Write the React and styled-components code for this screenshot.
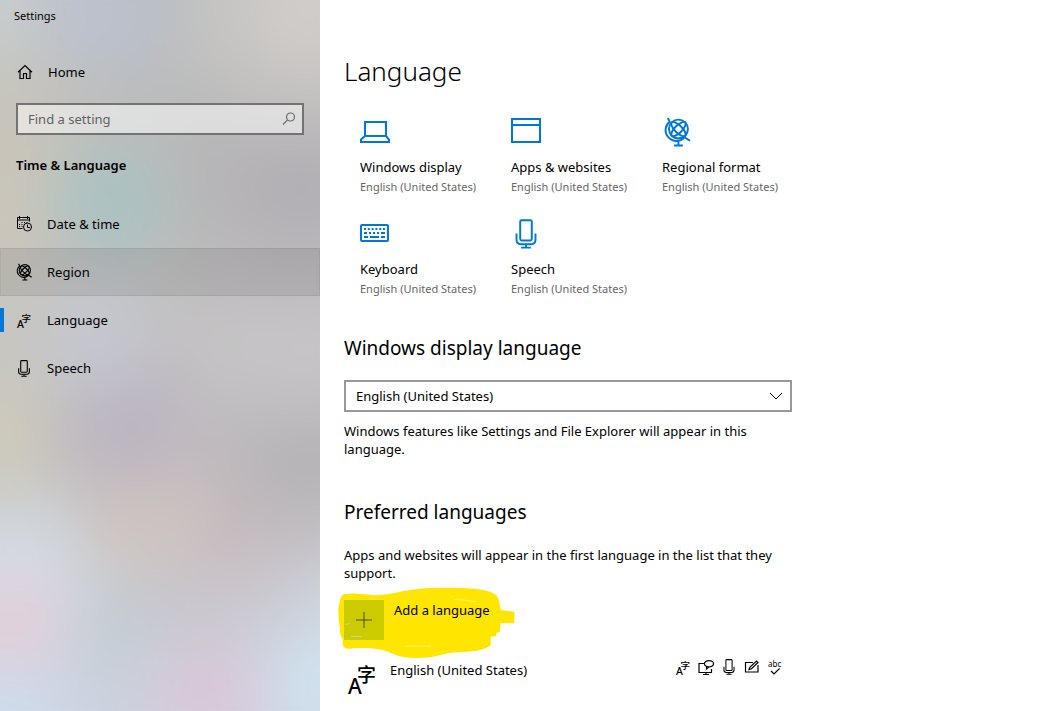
import React, { useState } from "react"
import styled, { createGlobalStyle } from "styled-components"

const GlobalStyle = createGlobalStyle`
  * {
    box-sizing: border-box;
  }

  body {
    margin: 0;
    background: #ffffff;
    color: #000000;
    font-family: "Segoe UI", "Noto Sans", "Open Sans", "Noto Sans CJK SC", sans-serif;
    font-size: 13px;
    line-height: 18px;
  }
`

const Page = styled.div`
  display: flex;
  min-height: 100vh;
`

const Sidebar = styled.aside`
  flex: 0 0 320px;
  position: relative;
  z-index: 0;
  overflow: hidden;
  background: #bfbebe;

  &::before {
    content: "";
    position: absolute;
    inset: -48px;
    z-index: -1;
    filter: blur(20px);
    background:
      radial-gradient(circle at 36% 8%, #bcc2d2 0, transparent 90px),
      radial-gradient(circle at 10% 6%, #cbd0d0 0, transparent 110px),
      radial-gradient(circle at 86% 7%, #d4cfcb 0, transparent 160px),
      radial-gradient(circle at 38% 31%, #a6c3c4 0, transparent 85px),
      radial-gradient(circle at 12% 21%, #c9c5ba 0, transparent 130px),
      radial-gradient(circle at 10% 32%, #cdc8bb 0, transparent 120px),
      radial-gradient(circle at 84% 29%, #b0aeb3 0, transparent 170px),
      radial-gradient(circle at 85% 46%, #cac8cb 0, transparent 140px),
      radial-gradient(circle at 34% 47%, #c6c9d2 0, transparent 90px),
      radial-gradient(circle at 10% 47%, #c8c7c0 0, transparent 110px),
      radial-gradient(circle at 42% 58%, #b9b2c0 0, transparent 110px),
      radial-gradient(circle at 12% 59%, #d0ccba 0, transparent 100px),
      radial-gradient(circle at 86% 61%, #b1b0b3 0, transparent 130px),
      radial-gradient(circle at 44% 70%, #d1c5bf 0, transparent 90px),
      radial-gradient(circle at 66% 72%, #c7bbbf 0, transparent 150px),
      radial-gradient(circle at 14% 83%, #e5ced9 0, transparent 85px),
      radial-gradient(circle at 14% 76%, #d4dee6 0, transparent 110px),
      radial-gradient(circle at 62% 92%, #dcc4d7 0, transparent 85px),
      radial-gradient(circle at 90% 90%, #d1e3f0 0, transparent 140px),
      radial-gradient(circle at 10% 94%, #cddfef 0, transparent 110px),
      radial-gradient(circle at 40% 82%, #c3ccd3 0, transparent 100px),
      linear-gradient(
        180deg,
        #b9bcbd 6%,
        #bdbcba 30%,
        #c2c1c1 46%,
        #c6c4c3 66%,
        #cdd3db 77%,
        #cdd1df 94%
      );
  }
`

const WindowTitle = styled.div`
  height: 32px;
  padding: 7px 14px;
  font-size: 11px;
`

const HomeLink = styled.a`
  display: flex;
  align-items: center;
  gap: 15px;
  height: 48px;
  margin-top: 16px;
  padding: 0 17px;
  color: inherit;
  text-decoration: none;
`

const SearchBox = styled.label`
  display: flex;
  align-items: center;
  height: 32px;
  margin: 7px 16px 0;
  padding: 0 6px 0 10px;
  border: 2px solid #737373;
  background: rgba(255, 255, 255, 0.5);
  color: #6a6a6a;
`

const SearchInput = styled.input`
  flex: 1;
  min-width: 0;
  padding: 0;
  border: none;
  outline: none;
  background: transparent;
  font: inherit;

  &::placeholder {
    color: #626262;
    opacity: 1;
  }
`

const SidebarHeading = styled.h2`
  margin: 21px 16px 26px;
  font-size: 13px;
  font-weight: 600;
  line-height: 18px;
`

const NavItem = styled.a`
  display: flex;
  align-items: center;
  gap: 15px;
  position: relative;
  height: 48px;
  padding: 0 16px;
  color: inherit;
  text-decoration: none;
  background: ${({ $hovered }) =>
    $hovered ? "rgba(0, 0, 0, 0.08)" : "transparent"};
  box-shadow: ${({ $hovered }) =>
    $hovered ? "inset 0 0 0 1px rgba(0, 0, 0, 0.06)" : "none"};

  &::before {
    content: "";
    display: ${({ $current }) => ($current ? "block" : "none")};
    position: absolute;
    left: 0;
    top: 12px;
    width: 4px;
    height: 24px;
    background: #0078d7;
  }
`

const Main = styled.main`
  flex: 1;
  min-width: 0;
  padding: 51px 24px 12px;
`

const Content = styled.div`
  max-width: 448px;
`

const Title = styled.h1`
  margin: 0 0 25px;
  font-size: 26px;
  font-weight: 300;
  line-height: 40px;
`

const Tiles = styled.div`
  display: grid;
  grid-template-columns: repeat(3, 1fr);
  row-gap: 20px;
  margin: 0 -21px 0 16px;
`

const Tile = styled.a`
  display: flex;
  flex-direction: column;
  color: inherit;
  text-decoration: none;
  white-space: nowrap;
`

const TileIcon = styled.span`
  display: flex;
  align-items: flex-start;
  height: 42px;
  padding-top: 1px;
  color: #0078d7;
`

const TileCaption = styled.span`
  line-height: 22px;
  color: #666666;
  font-size: 11px;
`

const SectionTitle = styled.h2`
  margin: ${({ $first }) => ($first ? "34px 0 18px" : "40px 0 20px")};
  font-size: 19px;
  font-weight: 400;
  line-height: 28px;
`

const SelectWrapper = styled.div`
  display: grid;
  align-items: center;

  > * {
    grid-area: 1 / 1;
  }

  > svg {
    justify-self: end;
    margin-right: 9px;
    pointer-events: none;
  }
`

const Select = styled.select`
  width: 100%;
  height: 32px;
  padding: 0 32px 0 10px;
  border: 2px solid #999999;
  border-radius: 0;
  appearance: none;
  background: #ffffff;
  color: #000000;
  font: inherit;
`

const Text = styled.p`
  margin: 10px 0 0;
`

const AddButton = styled.button`
  display: flex;
  position: relative;
  z-index: 0;
  gap: 10px;
  height: 40px;
  margin: 18px 0 0;
  padding: 0;
  border: none;
  background: none;
  color: inherit;
  font: inherit;
  cursor: pointer;
`

const AddTile = styled.span`
  display: flex;
  align-items: center;
  justify-content: center;
  width: 40px;
  height: 40px;
  background: #cccc00;
`

const Highlight = styled.svg`
  position: absolute;
  left: -6px;
  top: -13px;
  z-index: -1;
`

const AddLabel = styled.span`
  line-height: 20px;
`

const LanguageRow = styled.div`
  display: flex;
  align-items: flex-start;
  gap: 14px;
  margin-top: 20px;
  padding: 0 10px 0 4px;
`

const LanguageIcon = styled.span`
  display: flex;
  padding-top: 5px;
`

const LanguageName = styled.span`
  flex: 1;
  line-height: 20px;
`

const Features = styled.span`
  display: flex;
  align-items: center;
  gap: 8px;
  height: 14px;
`

const Svg = ({ width, height, box, children, stroke = 1 }) => (
  <svg
    width={width}
    height={height}
    viewBox={box || `0 0 ${width} ${height}`}
    fill="none"
    stroke="currentColor"
    strokeWidth={stroke}
    overflow="visible"
    aria-hidden="true"
  >
    {children}
  </svg>
)

const HomeIcon = () => (
  <Svg width={16} height={16} stroke={1.2}>
    <path d="M1 8.2 8 1.5l7 6.7M3 6.5V14.5H6.5V9.5H9.5V14.5H13V6.5" />
  </Svg>
)

const SearchIcon = () => (
  <Svg width={14} height={14} stroke={1.2}>
    <circle cx="8.5" cy="5" r="4" />
    <path d="M5.6 7.9 1 12.5" />
  </Svg>
)

const CalendarIcon = () => (
  <Svg width={16} height={18}>
    <path d="M6.5 13.5H1.5V2.5h12v4M1.5 5h12M3.5 1v3M11.5 1v3" />
    <path
      d="M5.5 7.5h1M8 7.5h1M10.5 7.5h1M3 9.5h1M5.5 9.5h1M3 11.5h1M5.5 11.5h1"
      strokeWidth="1.2"
    />
    <circle cx="11.5" cy="12" r="4" />
    <path d="M11.5 9.5v3h2.5" />
  </Svg>
)

const GlobeIcon = ({ width, height, stroke }) => (
  <Svg width={width} height={height} box="0 0 28 31" stroke={stroke}>
    <circle cx="15.5" cy="12.5" r="9.8" />
    <g transform="rotate(45 15.5 12.5)">
      <ellipse cx="15.5" cy="12.5" rx="3.8" ry="9.8" />
      <ellipse cx="15.5" cy="12.5" rx="9.8" ry="3.8" />
    </g>
    <path d="M4.5 1 6.5 5C1.5 8.5.8 15.500 4.500 20.300c4.500 5.400 11.500 6 16.700 1.700M21 20.500 27.500 24.500M15.500 25v4M11 29.500h9" />
  </Svg>
)

const LanguageGlyph = ({ width = 14, height = 15 }) => (
  <svg
    width={width}
    height={height}
    viewBox="0 0 28 30"
    fill="currentColor"
    fontWeight="500"
    overflow="visible"
    aria-hidden="true"
  >
    <text x="0" y="29" fontSize="21" fontFamily="Noto Sans, sans-serif">
      A
    </text>
    <text
      x="9"
      y="17"
      fontSize="19"
      fontFamily="Noto Sans CJK SC, sans-serif"
    >
      字
    </text>
  </svg>
)

const MicIcon = ({ width, height, stroke }) => (
  <Svg width={width} height={height} box="0 0 22 31" stroke={stroke}>
    <rect x="5" y="1.2" width="12" height="21" rx="1.5" />
    <path d="M1.2 15v6.5q0 4.5 4.5 4.5h10.6q4.5 0 4.5-4.5V15M11 26v3.5M6 29.6h10" />
  </Svg>
)

const LaptopIcon = () => (
  <Svg width={30} height={30} stroke={2}>
    <path d="M5 19V5H26V19M5 19H26L29 22.5V25H1V22.5Z" />
  </Svg>
)

const WindowIcon = () => (
  <Svg width={30} height={30} stroke={2}>
    <path d="M1 2H29V25H1ZM1 8H29" />
  </Svg>
)

const KeyboardIcon = () => (
  <Svg width={29} height={30} stroke={2}>
    <rect x="1" y="6" width="27" height="16" rx="1" />
    <path d="M4 10h21" strokeDasharray="2 1.8" />
    <path d="M4 14h3M9 14h2M13 14h2M17 14h2M21 14h4M4 18h4M10 18h9M21 18h4" />
  </Svg>
)

const DisplaySpeechIcon = () => (
  <Svg width={16} height={16} stroke={1.2}>
    <path d="M6 4.5H1v9h12.5V10M5 15.5h6M8 13.5v2" />
    <ellipse cx="11" cy="4.8" rx="4.6" ry="3.2" />
    <path d="M8.5 7.5v2.5l2.5-2" />
  </Svg>
)

const PenIcon = () => (
  <Svg width={16} height={16} stroke={1.2}>
    <path d="M9 3.5H1.5v9.5h12.5V6" />
    <path d="M5 10.5l1-2.5L12.5 2l1.5 1.5L7.5 9.8Z" />
  </Svg>
)

const SpellingIcon = () => (
  <Svg width={14} height={16} stroke={1.2}>
    <text
      x="0"
      y="8"
      fontSize="8"
      fontFamily="Noto Sans, sans-serif"
      fill="currentColor"
      stroke="none"
    >
      abc
    </text>
    <path d="M3 12l3 3 5.5-5.5" />
  </Svg>
)

const navItems = [
  { name: "Date & time", icon: <CalendarIcon /> },
  {
    name: "Region",
    icon: <GlobeIcon width={16} height={18} stroke={2} />,
    hovered: true,
  },
  { name: "Language", icon: <LanguageGlyph width={16} />, current: true },
  { name: "Speech", icon: <MicIcon width={16} height={17} stroke={2} /> },
]

const tiles = [
  { name: "Windows display", icon: <LaptopIcon /> },
  { name: "Apps & websites", icon: <WindowIcon /> },
  {
    name: "Regional format",
    icon: <GlobeIcon width={30} height={30} stroke={2} />,
  },
  { name: "Keyboard", icon: <KeyboardIcon /> },
  { name: "Speech", icon: <MicIcon width={30} height={30} stroke={2} /> },
]

const App = () => {
  const [search, setSearch] = useState("")

  return (
    <Page>
      <GlobalStyle />
      <Sidebar>
        <WindowTitle>Settings</WindowTitle>
        <HomeLink href="#home">
          <HomeIcon />
          Home
        </HomeLink>
        <SearchBox>
          <SearchInput
            type="text"
            aria-label="Find a setting"
            placeholder="Find a setting"
            value={search}
            onChange={e => setSearch(e.target.value)}
          />
          <SearchIcon />
        </SearchBox>
        <SidebarHeading>Time & Language</SidebarHeading>
        <nav>
          {navItems.map(({ name, icon, hovered, current }) => (
            <NavItem
              key={name}
              href="#settings"
              $hovered={hovered}
              $current={current}
            >
              {icon}
              {name}
            </NavItem>
          ))}
        </nav>
      </Sidebar>
      <Main>
        <Content>
          <Title>Language</Title>
          <Tiles>
            {tiles.map(({ name, icon }) => (
              <Tile key={name} href="#language">
                <TileIcon>{icon}</TileIcon>
                <span>{name}</span>
                <TileCaption>English (United States)</TileCaption>
              </Tile>
            ))}
          </Tiles>
          <SectionTitle $first>Windows display language</SectionTitle>
          <SelectWrapper>
            <Select aria-label="Windows display language">
              <option>English (United States)</option>
            </Select>
            <Svg width={14} height={8}>
              <path d="M1 1l6 6 6-6" />
            </Svg>
          </SelectWrapper>
          <Text>
            Windows features like Settings and File Explorer will appear in this
            language.
          </Text>
          <SectionTitle>Preferred languages</SectionTitle>
          <Text>
            Apps and websites will appear in the first language in the list that
            they support.
          </Text>
          <AddButton type="button">
            <Highlight
              width="178"
              height="72"
              viewBox="24 21 534 216"
              aria-hidden="true"
            >
              <path
                fill="#ffe600"
                d="M45 42C80 36 120 48 155 45C200 40 240 26 300 24C360 22 430 22 470 32Q505 40 508 65L512 90L553 95V129L512 130L510 155L498 160V168L482 170V195Q475 205 440 212C400 218 370 212 320 228C270 238 220 235 190 222C160 208 130 200 60 206Q38 208 38 190V176Q29 170 30 145L26 120L25 85L30 60Q32 46 45 42Z"
              />
              <path
                stroke="#fff6a0"
                strokeWidth="2"
                d="M372 58 400 60 438 65M225 199Q262 196 302 199"
                fill="none"
              />
            </Highlight>
            <AddTile>
              <Svg width={40} height={40}>
                <path d="M20 12v16M12 20h16" stroke="#4a4a00" />
                <path d="M7 36.5h11M1 24.5l5-1" stroke="#d0d0a8" />
              </Svg>
            </AddTile>
            <AddLabel>Add a language</AddLabel>
          </AddButton>
          <LanguageRow>
            <LanguageIcon>
              <LanguageGlyph width={28} height={30} />
            </LanguageIcon>
            <LanguageName>English (United States)</LanguageName>
            <Features>
              <LanguageGlyph />
              <DisplaySpeechIcon />
              <MicIcon width={14} height={16} stroke={2} />
              <PenIcon />
              <SpellingIcon />
            </Features>
          </LanguageRow>
        </Content>
      </Main>
    </Page>
  )
}

export default App
